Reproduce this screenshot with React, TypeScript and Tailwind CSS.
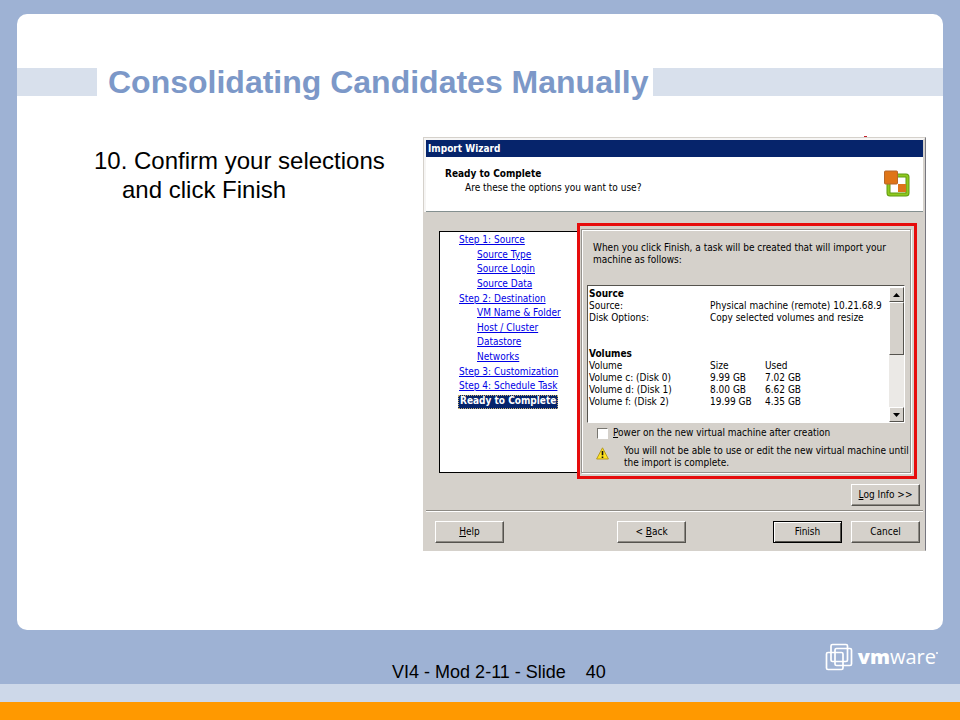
import { ReactNode } from 'react';

interface Step {
  label: string;
  sub?: boolean;
  current?: boolean;
}

const steps: Step[] = [
  { label: 'Step 1: Source' },
  { label: 'Source Type', sub: true },
  { label: 'Source Login', sub: true },
  { label: 'Source Data', sub: true },
  { label: 'Step 2: Destination' },
  { label: 'VM Name & Folder', sub: true },
  { label: 'Host / Cluster', sub: true },
  { label: 'Datastore', sub: true },
  { label: 'Networks', sub: true },
  { label: 'Step 3: Customization' },
  { label: 'Step 4: Schedule Task' },
  { label: 'Ready to Complete', current: true },
];

const volumes = [
  ['Volume c: (Disk 0)', '9.99 GB', '7.02 GB'],
  ['Volume d: (Disk 1)', '8.00 GB', '6.62 GB'],
  ['Volume f: (Disk 2)', '19.99 GB', '4.35 GB'],
];

function WizardButton({ children, primary }: { children: ReactNode; primary?: boolean }) {
  return (
    <button
      className={
        primary
          ? 'h-[22px] w-[69px] border border-black bg-[#d5d1cb] shadow-[inset_1px_1px_0_#fff,inset_-1px_-1px_0_#55534e]'
          : 'h-[22px] w-[69px] border border-t-white border-l-white border-r-[#55534e] border-b-[#55534e] bg-[#d5d1cb] shadow-[inset_-1px_-1px_0_#8d8a84]'
      }
    >
      {children}
    </button>
  );
}

function ScrollButton({ down }: { down?: boolean }) {
  return (
    <button
      aria-label={down ? 'Scroll down' : 'Scroll up'}
      className="flex h-[15px] w-full items-center justify-center border border-t-white border-l-white border-r-[#55534e] border-b-[#55534e] bg-[#d5d1cb]"
    >
      <svg width="7" height="4" viewBox="0 0 7 4">
        <path d={down ? 'M0 0h7L3.5 4z' : 'M0 4h7L3.5 0z'} fill="#000" />
      </svg>
    </button>
  );
}

function WizardLogo() {
  return (
    <svg width="28" height="28" viewBox="0 0 28 28" className="mt-[13px] mr-3">
      <rect x="5.5" y="5.5" width="19" height="19" rx="1.5" fill="#fff" stroke="#5f9a12" strokeWidth="4" />
      <rect x="5.5" y="5.5" width="19" height="19" rx="1.5" fill="none" stroke="#8fc91f" strokeWidth="2" />
      <rect x="15" y="14" width="8" height="8" fill="#dd7419" />
      <rect x="1.5" y="1" width="13" height="13" rx="1" fill="#df7517" stroke="#b5662a" />
    </svg>
  );
}

function ImportWizard() {
  return (
    <section className="relative w-[503px] shrink-0 border border-t-[#d5d1cb] border-l-[#d5d1cb] border-r-[#77777f] border-b-[#d5d1cb] bg-[#d5d1cb] font-['DejaVu_Sans_Condensed','DejaVu_Sans',sans-serif] text-[10px] leading-3 text-black">
      <span className="absolute -top-0.5 right-[58px] h-px w-[3px] bg-[#c4202c]" />
      <div className="border-2 border-b-0 border-white/80 border-r-[#d5d1cb]">
        <h2 className="h-[17px] bg-[#06246b] pl-0.5 text-[10px] leading-[18px] font-bold text-white">Import Wizard</h2>
        <header className="flex h-[55px] justify-between border-b border-[#849090] bg-white">
          <div className="pt-[11px] pl-[19px]">
            <h3 className="text-[10px] leading-3 font-bold">Ready to Complete</h3>
            <p className="mt-0.5 pl-5">Are these the options you want to use?</p>
          </div>
          <WizardLogo />
        </header>
      </div>

      <div className="flex pt-[11px] pr-2 pl-[15px]">
        <nav className="mt-2 h-[242px] flex-1 border border-black border-r-0 bg-white">
          <ol className="flex h-[175px] flex-col justify-between pt-0.5">
            {steps.map((step) => (
              <li key={step.label} className={step.sub ? 'h-3 pl-9' : 'h-3 pl-[18px]'}>
                {step.current ? (
                  <a href="#" aria-current="step" className="block h-[14px] w-fit bg-[#06246b] px-0.5 leading-3 font-bold whitespace-nowrap text-white outline outline-dotted outline-[#c8b070] -outline-offset-1">
                    {step.label}
                  </a>
                ) : (
                  <a href="#" className="pl-px whitespace-nowrap text-[#0000e6] underline">{step.label}</a>
                )}
              </li>
            ))}
          </ol>
        </nav>

        {/* Summary, outlined in red */}
        <div className="h-[256px] w-[340px] border-3 border-[#e60c0c] py-[3px] pr-[3px] pl-px">
          <div className="flex h-full flex-col border border-[#96948f] pt-3 pr-[5px] pl-[5px] shadow-[inset_1px_1px_0_#fff,1px_1px_0_#fff]">
            <p className="pl-1.5 whitespace-nowrap">
              When you click Finish, a task will be created that will import your<br />machine as follows:
            </p>
            <div className="mt-[19px] flex h-[138px] border border-t-[#55534e] border-l-[#55534e] border-r-white border-b-white bg-white pt-px">
              <div className="flex-1 pt-px pl-px">
                <h4 className="text-[10px] leading-3 font-bold">Source</h4>
                <table className="w-full table-fixed text-left">
                  <tbody>
                    <tr>
                      <th className="w-[121px] font-normal">Source:</th>
                      <td className="whitespace-nowrap">Physical machine (remote) 10.21.68.9</td>
                    </tr>
                    <tr>
                      <th className="font-normal">Disk Options:</th>
                      <td className="whitespace-nowrap">Copy selected volumes and resize</td>
                    </tr>
                  </tbody>
                </table>
                <h4 className="mt-6 text-[10px] leading-3 font-bold">Volumes</h4>
                <table className="w-full table-fixed text-left">
                  <thead>
                    <tr>
                      <th className="w-[121px] font-normal">Volume</th>
                      <th className="w-[55px] font-normal">Size</th>
                      <th className="font-normal">Used</th>
                    </tr>
                  </thead>
                  <tbody>
                    {volumes.map(([name, size, used]) => (
                      <tr key={name}>
                        <td>{name}</td>
                        <td>{size}</td>
                        <td>{used}</td>
                      </tr>
                    ))}
                  </tbody>
                </table>
              </div>
              <div className="flex w-[15px] flex-col bg-[#ebe9e6]">
                <ScrollButton />
                <div className="h-[53px] border border-t-white border-l-white border-r-[#55534e] border-b-[#55534e] bg-[#d5d1cb]" />
                <div className="flex-1" />
                <ScrollButton down />
              </div>
            </div>
            <label className="mt-1 flex h-3 items-center gap-[5px] pl-[10px]">
              <input type="checkbox" className="h-[11px] w-[11px] appearance-none border border-t-[#77756f] border-l-[#77756f] border-r-white border-b-white bg-white" />
              <span><u>P</u>ower on the new virtual machine after creation</span>
            </label>
            <div className="mt-1.5 flex pl-[9px]">
              <svg width="13" height="13" viewBox="0 0 13 13" className="mt-0.5 shrink-0">
                <path d="M6.5 .8L12.4 12H.6z" fill="#ffe21f" stroke="#b59a20" strokeWidth="1" strokeLinejoin="round" />
                <path d="M6.5 4v4.2M6.5 9.5v1.5" stroke="#111" strokeWidth="1.6" />
              </svg>
              <p className="pl-[15px] whitespace-nowrap">
                You will not be able to use or edit the new virtual machine until<br />the import is complete.
              </p>
            </div>
          </div>
        </div>
      </div>

      <div className="flex justify-end pt-[5px] pr-[5px] pb-1">
        <WizardButton><u>L</u>og Info &gt;&gt;</WizardButton>
      </div>
      <footer className="mx-0.5 flex border-t border-[#8d8a84] pt-[10px] pr-[3px] pb-[7px] pl-[9px] shadow-[inset_0_1px_0_#fff]">
        <WizardButton><u>H</u>elp</WizardButton>
        <div className="flex flex-1 justify-end pr-[87px]">
          <WizardButton>&lt; <u>B</u>ack</WizardButton>
        </div>
        <div className="flex gap-[9px]">
          <WizardButton primary>Finish</WizardButton>
          <WizardButton>Cancel</WizardButton>
        </div>
      </footer>
    </section>
  );
}

function VmwareLogo() {
  return (
    <div className="flex items-center gap-[5px] text-white">
      <svg width="28" height="28" viewBox="0 0 28 28" fill="none" stroke="#fff" strokeWidth="1.7">
        <rect x="6" y="1.5" width="16.5" height="17" rx="1.5" />
        <rect x="10" y="5.5" width="16.5" height="17" rx="1.5" />
        <rect x="1.5" y="9.5" width="16.5" height="17" rx="1.5" />
      </svg>
      <span className="flex items-start font-['Open_Sans',sans-serif] text-[20px] leading-7">
        <b className="font-extrabold">vm</b>ware
        <span className="mt-[9px] h-0.5 w-0.5 rounded-full bg-white" />
      </span>
    </div>
  );
}

function App() {
  return (
    <div className="flex min-h-screen flex-col bg-[#9eb2d4] font-['Liberation_Sans',Arial,sans-serif] text-black">
      <main className="mx-[17px] mt-[14px] flex-1 rounded-[10px] bg-white pt-[54px]">
        <div className="flex h-7 items-center">
          <div className="h-full w-20 bg-[#d8e0ec]" />
          <h1 className="pr-1 pl-[11px] text-[32px] leading-7 font-bold whitespace-nowrap text-[#7c98c8]">
            Consolidating Candidates Manually
          </h1>
          <div className="h-full flex-1 bg-[#d8e0ec]" />
        </div>
        <div className="mt-[41px] flex justify-between pr-[17px] pl-[77px]">
          <p className="pt-[9px] pl-7 -indent-7 text-[24px] leading-[29px] whitespace-nowrap">
            10. Confirm your selections<br />
            <span className="inline-block indent-0">and click Finish</span>
          </p>
          <ImportWizard />
        </div>
      </main>

      <div className="grid h-[54px] grid-cols-3 pr-[22px]">
        <p className="col-start-2 flex gap-5 self-end justify-self-center pb-[2px] pl-[60px] text-[18px] leading-5 whitespace-nowrap">
          <span>VI4 - Mod 2-11 - Slide</span>
          <span>40</span>
        </p>
        <div className="justify-self-end pt-[13px]">
          <VmwareLogo />
        </div>
      </div>
      <div className="h-[18px] bg-[#cdd8e9]" />
      <div className="h-[18px] bg-[#ff9900]" />
    </div>
  );
}

export default App;
